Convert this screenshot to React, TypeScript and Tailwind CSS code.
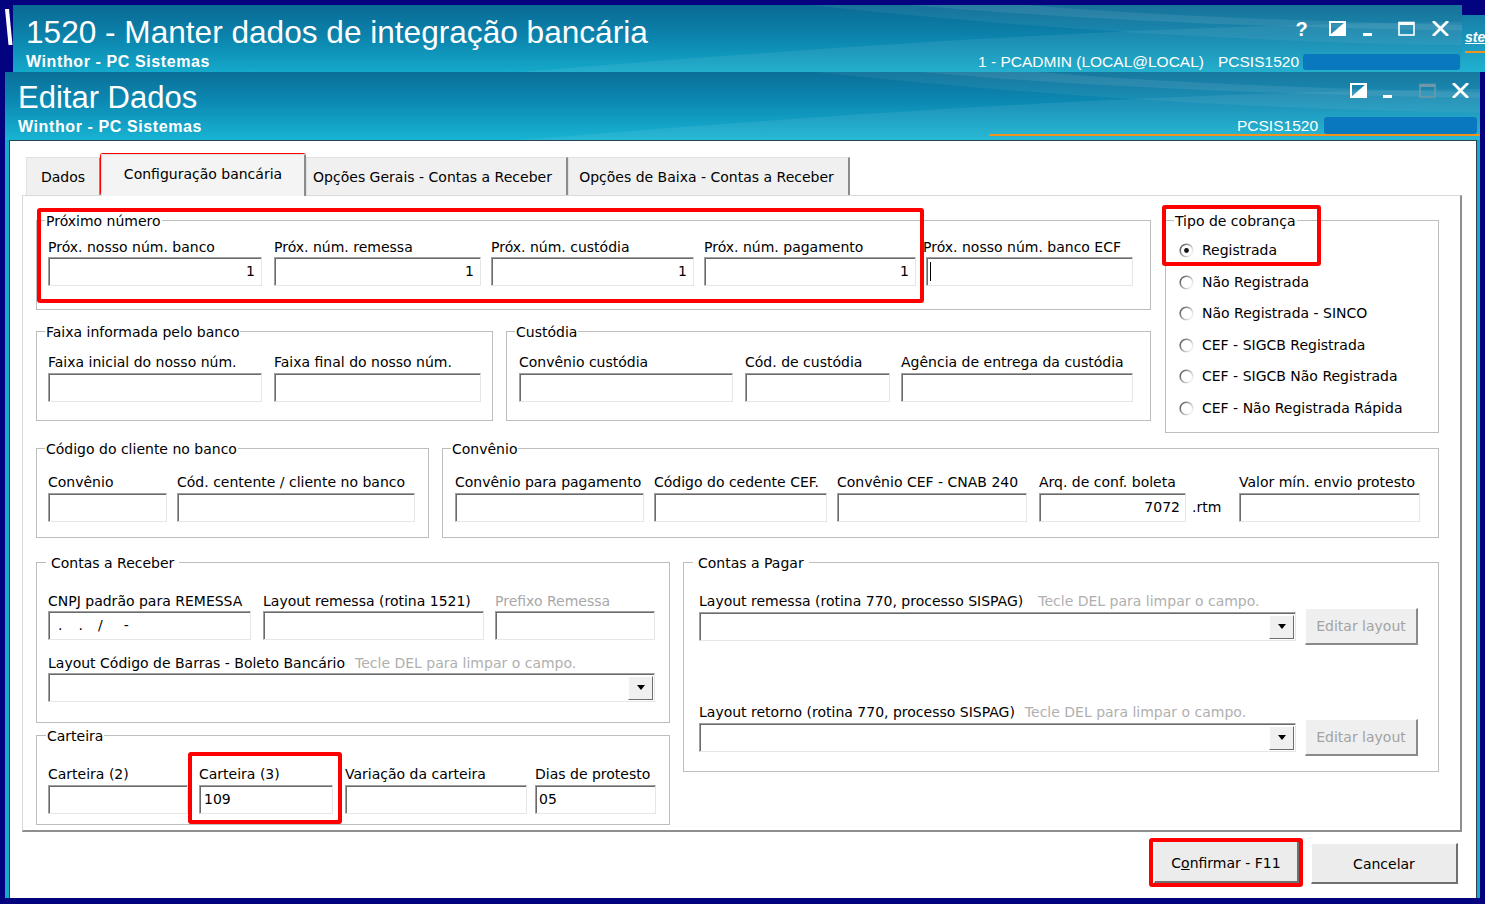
import React from "react";

const TEAL1 = "bg-[linear-gradient(180deg,#0a6a94_0%,#0b82ab_45%,#14a9ca_100%)]";
const TEAL2 = "bg-[linear-gradient(180deg,#0a6f99_0%,#0c8ab3_45%,#18b4d3_100%)]";
const BOX =
  "bg-white border border-t-[#a0a0a0] border-l-[#a0a0a0] border-r-[#e6e6e6] border-b-[#e6e6e6] shadow-[inset_1px_1px_0_#6a6a6a]";

function Swoosh({ w, h }: { w: number; h: number }) {
  return (
    <svg
      className="absolute inset-0 pointer-events-none"
      width={w}
      height={h}
      viewBox={`0 0 ${w} ${h}`}
      preserveAspectRatio="none"
    >
      <path d={`M ${w * 0.35} ${h} C ${w * 0.6} ${h * 0.55}, ${w * 0.8} ${h * 0.3}, ${w} ${h * 0.25} L ${w} ${h} Z`} fill="#ffffff" opacity="0.07" />
      <path d={`M ${w * 0.55} 0 C ${w * 0.7} ${h * 0.35}, ${w * 0.85} ${h * 0.55}, ${w} ${h * 0.6} L ${w} 0 Z`} fill="#ffffff" opacity="0.06" />
      <path d={`M ${w * 0.62} 0 C ${w * 0.75} ${h * 0.25}, ${w * 0.9} ${h * 0.35}, ${w} ${h * 0.38} L ${w} ${h * 0.3} C ${w * 0.9} ${h * 0.25}, ${w * 0.78} ${h * 0.15}, ${w * 0.7} 0 Z`} fill="#ffffff" opacity="0.08" />
    </svg>
  );
}

function RestoreIcon() {
  return (
    <svg width="17" height="15" viewBox="0 0 17 15">
      <rect x="1" y="1" width="15" height="13" fill="none" stroke="#fff" strokeWidth="2" />
      <polygon points="1,14 16,1 16,14" fill="#fff" />
    </svg>
  );
}

function MaxIcon({ dim }: { dim?: boolean }) {
  return (
    <svg width="17" height="15" viewBox="0 0 17 15">
      <rect x="1" y="1.5" width="15" height="12.5" fill="none" stroke={dim ? "#6f98a8" : "#fff"} strokeWidth="1.6" />
      <rect x="1" y="1" width="15" height="3" fill={dim ? "#6f98a8" : "#fff"} />
    </svg>
  );
}

function CloseIcon() {
  return (
    <svg width="17" height="15" viewBox="0 0 17 15">
      <path d="M2 1 L15 14 M15 1 L2 14" stroke="#fff" strokeWidth="2.8" strokeLinecap="square" />
    </svg>
  );
}

function MinIcon() {
  return <div className="w-[9px] h-[3px] bg-white mt-[12px]" />;
}

function Group({
  title,
  className = "",
  titleClass = "left-[8px] px-[1px]",
  children,
}: {
  title: string;
  className?: string;
  titleClass?: string;
  children?: React.ReactNode;
}) {
  return (
    <div className={`relative border border-[#bdbdbd] ${className}`}>
      <span className={`absolute top-[-8px] bg-white leading-[17px] whitespace-nowrap ${titleClass}`}>{title}</span>
      {children}
    </div>
  );
}

function Field({
  label,
  w,
  gap = "mt-[3px]",
  labelClass = "",
  boxClass = "",
  children,
}: {
  label: React.ReactNode;
  w: string;
  gap?: string;
  labelClass?: string;
  boxClass?: string;
  children?: React.ReactNode;
}) {
  return (
    <div className={`flex flex-col shrink-0 ${w}`}>
      <div className={`h-[17px] whitespace-nowrap ${labelClass}`}>{label}</div>
      <div className={`h-[29px] flex items-center ${BOX} ${gap} ${boxClass}`}>{children}</div>
    </div>
  );
}

function DropButton() {
  return (
    <div className="w-[25px] h-[24px] bg-[#f0f0f0] border-t border-l border-t-white border-l-white border-r border-b border-r-[#6d6d6d] border-b-[#6d6d6d] flex items-center justify-center">
      <svg width="8" height="5" viewBox="0 0 8 5">
        <polygon points="0,0 8,0 4,5" fill="#000" />
      </svg>
    </div>
  );
}

function Combo({ w }: { w: string }) {
  return (
    <div className={`h-[29px] flex items-center justify-end pr-[1px] shrink-0 ${BOX} ${w}`}>
      <DropButton />
    </div>
  );
}

function EditButton() {
  return (
    <div className="w-[113px] h-[37px] ml-[9px] pt-[1px] bg-[#efefef] border-t border-l border-t-white border-l-white border-r-2 border-b-2 border-r-[#8a8a8a] border-b-[#8a8a8a] flex items-center justify-center text-[#a3a3a3]">
      Editar layout
    </div>
  );
}

function Radio({ checked, id }: { checked?: boolean; id: string }) {
  return (
    <svg width="15" height="15" viewBox="0 0 15 15" className="shrink-0">
      <defs>
        <linearGradient id={id} x1="0" y1="0" x2="1" y2="0.6">
          <stop offset="0" stopColor="#4a4a4a" />
          <stop offset="0.55" stopColor="#a8a8a8" />
          <stop offset="1" stopColor="#f0f0f0" />
        </linearGradient>
      </defs>
      <circle cx="7.5" cy="7.5" r="6.3" fill="#fff" stroke={`url(#${id})`} strokeWidth="1.6" />
      {checked && <circle cx="7.5" cy="7.5" r="2.4" fill="#111" />}
    </svg>
  );
}

function Tab({ label, className }: { label: string; className: string }) {
  return (
    <div
      className={`flex items-center justify-center whitespace-nowrap bg-[#f0f0f0] border-t border-l border-t-[#e0e0e0] border-l-[#e0e0e0] border-r-2 border-r-[#8c8c8c] ${className}`}
    >
      {label}
    </div>
  );
}

function Red({ className }: { className: string }) {
  return <div className={`absolute border-[4px] border-[#ff0000] rounded-[3px] pointer-events-none ${className}`} />;
}

const RADIOS = [
  "Registrada",
  "Não Registrada",
  "Não Registrada - SINCO",
  "CEF - SIGCB Registrada",
  "CEF - SIGCB Não Registrada",
  "CEF - Não Registrada Rápida",
];

export default function App() {
  return (
    <div className="relative w-[1485px] h-[904px] overflow-hidden bg-[#03037f] font-['Liberation_Sans',Arial,sans-serif] text-black">
      {/* main window title row */}
      <div className="flex h-[67px] mt-[5px]">
        <div className="w-[13px] h-full">
          <svg width="13" height="67" viewBox="0 0 13 67">
            <polygon points="5,4 9,4 12.5,40 8.5,40" fill="#ffffff" />
          </svg>
        </div>
        <div className={`relative w-[1449px] h-full flex justify-between ${TEAL1}`}>
          <Swoosh w={1449} h={67} />
          <div className="relative flex flex-col pl-[13px] pt-[11px] text-white">
            <div className="text-[31.6px] leading-[32px] whitespace-nowrap">1520 - Manter dados de integração bancária</div>
            <div className="mt-[5px] text-[16px] leading-[18px] font-bold tracking-[0.6px] whitespace-nowrap">
              Winthor - PC Sistemas
            </div>
          </div>
          <div className="relative flex flex-col items-end pr-[2px] text-white">
            <div className="flex items-start h-[15px] mt-[16px] mr-[11px]">
              <span className="w-[17px] text-center font-bold text-[20px] leading-[15px] relative top-[1px]">?</span>
              <div className="ml-[19px]">
                <RestoreIcon />
              </div>
              <div className="ml-[16px] w-[10px] flex justify-center">
                <MinIcon />
              </div>
              <div className="ml-[26px]">
                <MaxIcon />
              </div>
              <div className="ml-[17px]">
                <CloseIcon />
              </div>
            </div>
            <div className="flex items-center mt-[18px] h-[16px]">
              <span className="text-[15.5px] leading-[18px] whitespace-nowrap">1 - PCADMIN (LOCAL@LOCAL)</span>
              <span className="ml-[14px] text-[15.5px] leading-[18px]">PCSIS1520</span>
              <div className="ml-[4px] w-[157px] h-[16px] rounded-[3px] bg-[#0a78bf]" />
            </div>
          </div>
        </div>
        <div className="w-[23px] h-full flex flex-col">
          <div className="h-[10px]" />
          <div className="flex-1 bg-[linear-gradient(180deg,#167fa8,#20b2d2)] overflow-hidden pl-[3px]">
            <div className="mt-[14px] text-[14px] italic font-bold underline text-white leading-[16px]">ste</div>
            <div className="mt-[6px] h-[2px] bg-[#f0921c]" />
          </div>
        </div>
      </div>

      {/* edit window */}
      <div className="flex h-[826px]">
        <div className="w-[5px]" />
        <div className="w-[1475px] flex flex-col">
          <div className={`relative h-[68px] flex justify-between ${TEAL2}`}>
            <Swoosh w={1475} h={68} />
            <div className="relative flex flex-col pl-[13px] pt-[10px] text-white">
              <div className="text-[31px] leading-[31px] whitespace-nowrap">Editar Dados</div>
              <div className="mt-[5px] text-[16px] leading-[18px] font-bold tracking-[0.6px] whitespace-nowrap">
                Winthor - PC Sistemas
              </div>
            </div>
            <div className="relative flex flex-col items-end text-white">
              <div className="flex items-start h-[15px] mt-[11px] mr-[11px]">
                <RestoreIcon />
                <div className="ml-[15px] w-[10px] flex justify-center">
                  <MinIcon />
                </div>
                <div className="ml-[27px]">
                  <MaxIcon dim />
                </div>
                <div className="ml-[16px]">
                  <CloseIcon />
                </div>
              </div>
              <div className="flex items-center mt-[19px] h-[17px] mr-[3px]">
                <span className="text-[15.5px] leading-[18px]">PCSIS1520</span>
                <div className="ml-[6px] w-[153px] h-[17px] rounded-[3px] bg-[#0a78bf]" />
              </div>
              <div className="w-[491px] h-[2px] bg-[#f0921c]" />
            </div>
          </div>

          <div className="flex h-[758px]">
            <div className="w-[4px] bg-[#17a9c9]" />
            <div className="w-[1468px] h-full bg-white border-l border-t border-r border-[#29444f] flex flex-col font-['DejaVu_Sans',sans-serif] text-[14px] leading-[17px]">
              {/* tabs */}
              <div className="flex items-end h-[41px] mt-[13px] ml-[16px]">
                <Tab label="Dados" className="w-[75px] h-[38px] pt-[1px]" />
                <Tab
                  label="Configuração bancária"
                  className="w-[205px] h-[42px] -mb-[1px] relative z-10 bg-[#f4f4f4] pb-[2px]"
                />
                <Tab label="Opções Gerais - Contas a Receber" className="w-[262px] h-[38px] pt-[1px] pr-[8px]" />
                <Tab label="Opções de Baixa - Contas a Receber" className="w-[282px] h-[38px] pt-[1px] pr-[4px]" />
              </div>

              {/* tab page */}
              <div className="ml-[12px] w-[1440px] h-[637px] bg-white border-t border-l border-t-[#d9d9d9] border-l-[#d9d9d9] border-r-2 border-b-2 border-r-[#8e8e8e] border-b-[#8e8e8e] flex flex-col">
                <div className="flex mt-[24px] ml-[13px]">
                  <div className="w-[1115px] flex flex-col">
                    <Group title="Próximo número" className="h-[90px] pt-[18px] pl-[11px]" titleClass="left-[8px] px-[1px] top-[-7px]">
                      <div className="flex">
                        <Field label="Próx. nosso núm. banco" w="w-[214px]" gap="mt-[1px]" boxClass="justify-end pr-[6px]">1</Field>
                        <Field label="Próx. núm. remessa" w="w-[207px] ml-[12px]" gap="mt-[1px]" boxClass="justify-end pr-[6px]">1</Field>
                        <Field label="Próx. núm. custódia" w="w-[203px] ml-[10px]" gap="mt-[1px]" boxClass="justify-end pr-[6px]">1</Field>
                        <Field label="Próx. núm. pagamento" w="w-[212px] ml-[10px]" gap="mt-[1px]" boxClass="justify-end pr-[6px]">1</Field>
                        <Field label="Próx. nosso núm. banco ECF" w="w-[207px] ml-[10px]" gap="mt-[1px]" labelClass="-ml-[3px]" boxClass="pl-[3px]">
                          <div className="w-[1px] h-[19px] bg-black" />
                        </Field>
                      </div>
                    </Group>
                    <div className="flex mt-[21px]">
                      <Group title="Faixa informada pelo banco" className="w-[457px] h-[90px] pt-[22px] pl-[11px]">
                        <div className="flex">
                          <Field label="Faixa inicial do nosso núm." w="w-[214px]" gap="mt-[2px]" />
                          <Field label="Faixa final do nosso núm." w="w-[207px] ml-[12px]" gap="mt-[2px]" />
                        </div>
                      </Group>
                      <Group title="Custódia" className="w-[645px] ml-[13px] h-[90px] pt-[22px] pl-[12px]">
                        <div className="flex">
                          <Field label="Convênio custódia" w="w-[214px]" gap="mt-[2px]" />
                          <Field label="Cód. de custódia" w="w-[145px] ml-[12px]" gap="mt-[2px]" />
                          <Field label="Agência de entrega da custódia" w="w-[232px] ml-[11px]" gap="mt-[2px]" />
                        </div>
                      </Group>
                    </div>
                  </div>
                  <Group title="Tipo de cobrança" className="w-[274px] h-[213px] ml-[14px] pt-[21px] pl-[13px]">
                    <div className="flex flex-col gap-[14.6px]">
                      {RADIOS.map((r, i) => (
                        <div key={r} className="flex items-center h-[17px] gap-[8px] whitespace-nowrap">
                          <Radio checked={i === 0} id={`rg${i}`} />
                          <span>{r}</span>
                        </div>
                      ))}
                    </div>
                  </Group>
                </div>

                <div className="flex mt-[15px] ml-[13px]">
                  <Group title="Código do cliente no banco" className="w-[393px] h-[90px] pt-[25px] pl-[11px]">
                    <div className="flex">
                      <Field label="Convênio" w="w-[119px]" gap="mt-[2px]" />
                      <Field label="Cód. centente / cliente no banco" w="w-[238px] ml-[10px]" gap="mt-[2px]" />
                    </div>
                  </Group>
                  <Group title="Convênio" className="w-[997px] ml-[13px] h-[90px] pt-[25px] pl-[12px]">
                    <div className="flex">
                      <Field label="Convênio para pagamento" w="w-[189px]" gap="mt-[2px]" />
                      <Field label="Código do cedente CEF." w="w-[173px] ml-[10px]" gap="mt-[2px]" />
                      <Field label="Convênio CEF - CNAB 240" w="w-[190px] ml-[10px]" gap="mt-[2px]" />
                      <Field label="Arq. de conf. boleta" w="w-[147px] ml-[12px]" gap="mt-[2px]" boxClass="justify-end pr-[5px]">
                        7072
                      </Field>
                      <div className="w-[53px] shrink-0 flex items-end pb-[6px] pl-[6px]">.rtm</div>
                      <Field label="Valor mín. envio protesto" w="w-[181px]" gap="mt-[2px]" />
                    </div>
                  </Group>
                </div>

                <div className="flex mt-[24px] ml-[13px]">
                  <div className="w-[634px] flex flex-col">
                    <Group title="Contas a Receber" className="h-[161px] pt-[30px] pl-[11px]" titleClass="left-[9px] px-[5px] top-[-7px]">
                      <div className="flex">
                        <Field label="CNPJ padrão para REMESSA" w="w-[203px]" gap="mt-[1px]">
                          <span className="ml-[9px]">.</span>
                          <span className="ml-[16px]">.</span>
                          <span className="ml-[15px]">/</span>
                          <span className="ml-[21px]">-</span>
                        </Field>
                        <Field label="Layout remessa (rotina 1521)" w="w-[221px] ml-[12px]" gap="mt-[1px]" />
                        <Field label="Prefixo Remessa" w="w-[160px] ml-[11px]" gap="mt-[1px]" labelClass="text-[#a8a8a8]" />
                      </div>
                      <div className="flex h-[17px] mt-[15px] whitespace-nowrap">
                        <span>Layout Código de Barras - Boleto Bancário</span>
                        <span className="ml-[10px] text-[#b0b0b0]">Tecle DEL para limpar o campo.</span>
                      </div>
                      <div className="mt-[1px]">
                        <Combo w="w-[607px]" />
                      </div>
                    </Group>
                    <Group title="Carteira" className="h-[90px] mt-[12px] pt-[30px] pl-[11px]" titleClass="left-[9px] px-[1px] top-[-7px]">
                      <div className="flex">
                        <Field label="Carteira (2)" w="w-[140px]" gap="mt-[2px]" />
                        <Field label="Carteira (3)" w="w-[134px] ml-[11px]" gap="mt-[2px]" boxClass="pl-[4px]">
                          109
                        </Field>
                        <Field label="Variação da carteira" w="w-[182px] ml-[12px]" gap="mt-[2px]" />
                        <Field label="Dias de protesto" w="w-[121px] ml-[8px]" gap="mt-[2px]" boxClass="pl-[3px]">
                          05
                        </Field>
                      </div>
                    </Group>
                  </div>
                  <Group title="Contas a Pagar" className="w-[756px] h-[210px] ml-[13px] pt-[30px] pl-[15px]" titleClass="left-[9px] px-[5px] top-[-7px]">
                    <div className="flex h-[17px] whitespace-nowrap">
                      <span>Layout remessa (rotina 770, processo SISPAG)</span>
                      <span className="ml-[15px] text-[#b0b0b0]">Tecle DEL para limpar o campo.</span>
                    </div>
                    <div className="flex items-center h-[37px] -mt-[2px]">
                      <Combo w="w-[597px]" />
                      <EditButton />
                    </div>
                    <div className="flex h-[17px] mt-[59px] whitespace-nowrap">
                      <span>Layout retorno (rotina 770, processo SISPAG)</span>
                      <span className="ml-[10px] text-[#b0b0b0]">Tecle DEL para limpar o campo.</span>
                    </div>
                    <div className="flex items-center h-[37px] -mt-[2px]">
                      <Combo w="w-[597px]" />
                      <EditButton />
                    </div>
                  </Group>
                </div>
              </div>

              {/* dialog buttons */}
              <div className="flex justify-end items-start mt-[9px] pr-[18px]">
                <div className="w-[145px] h-[42px] pt-[3px] bg-[#ececec] border-t border-l border-t-white border-l-white border-r-2 border-b-2 border-r-[#707070] border-b-[#707070] flex items-center justify-center">
                  <span>
                    C<span className="underline">o</span>nfirmar - F11
                  </span>
                </div>
                <div className="w-[147px] h-[41px] ml-[12px] mt-[2px] pt-[2px] bg-[#ececec] border-t border-l border-t-white border-l-white border-r-2 border-b-2 border-r-[#707070] border-b-[#707070] flex items-center justify-center">
                  Cancelar
                </div>
              </div>
            </div>
            <div className="w-[3px] bg-[#17a9c9]" />
          </div>
        </div>
      </div>

      {/* highlight marks */}
      <Red className="left-[100px] top-[153px] w-[206px] h-[42px]" />
      <Red className="left-[37px] top-[208px] w-[887px] h-[95px]" />
      <Red className="left-[1162px] top-[205px] w-[159px] h-[61px]" />
      <Red className="left-[188px] top-[752px] w-[154px] h-[72px]" />
      <Red className="left-[1149px] top-[838px] w-[154px] h-[49px]" />
    </div>
  );
}
